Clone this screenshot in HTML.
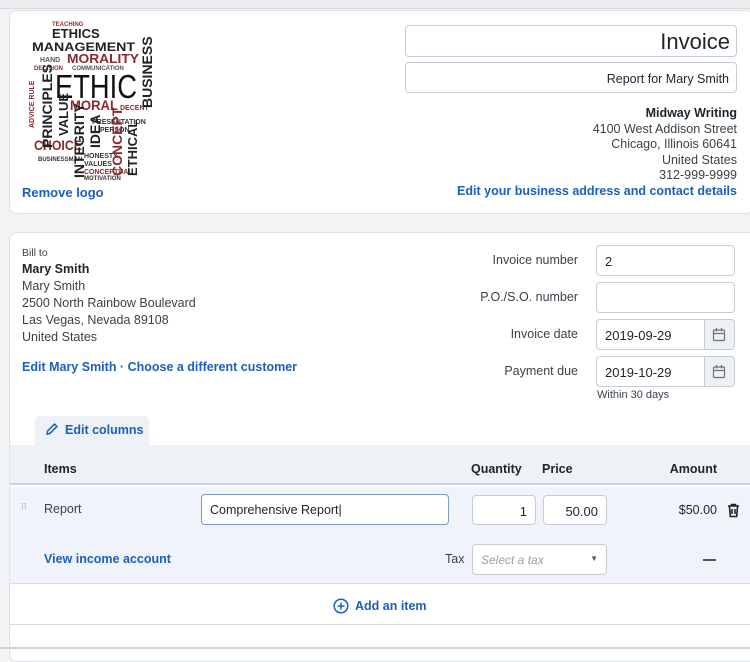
<!DOCTYPE html>
<html><head><meta charset="utf-8"><style>
*{box-sizing:border-box;margin:0;padding:0}
body{width:750px;height:649px;overflow:hidden;background:#f2f3f5;font-family:"Liberation Sans",sans-serif;color:#1c252c;position:relative;font-size:13px}
.a{position:absolute;white-space:nowrap}
.card{position:absolute;background:#fff;border:1px solid #dfe2e6;border-radius:8px}
.link{color:#1b5fbf;font-weight:bold}
.in{position:absolute;border:1px solid #c6ccd3;border-radius:4px;background:#fff}
.r{text-align:right}
.g{color:#3a4249}
</style></head><body>
<div class="a" style="left:0;top:0;width:750px;height:9px;background:#eceef0;border-bottom:1px solid #d6d9dd"></div>
<div class="card" style="left:9px;top:10px;width:745px;height:204px"></div>
<svg class="a" style="left:22px;top:18px" width="140" height="162" viewBox="0 0 140 162" font-family="Liberation Sans" font-weight="bold">
<text x="30" y="20" font-size="13" fill="#222">ETHICS</text>
<text x="30" y="8" font-size="6" fill="#9b2a2a">TEACHING</text>
<text x="10" y="33" font-size="12" fill="#222" textLength="103" lengthAdjust="spacingAndGlyphs">MANAGEMENT</text>
<text x="45" y="45" font-size="13" fill="#8c2a30" textLength="72" lengthAdjust="spacingAndGlyphs">MORALITY</text>
<text x="18" y="44" font-size="7" fill="#555">HAND</text>
<text x="12" y="52" font-size="6" fill="#8c2a30">DECISION</text>
<text x="50" y="52" font-size="6" fill="#555">COMMUNICATION</text>
<text x="33" y="80" font-size="33" fill="#111" font-weight="normal" textLength="82" lengthAdjust="spacingAndGlyphs">ETHIC</text>
<text x="48" y="92" font-size="14" fill="#8c2a30" textLength="48" lengthAdjust="spacingAndGlyphs">MORAL</text>
<text x="98" y="92" font-size="7" fill="#8c2a30">DECENT</text>
<text x="70" y="106" font-size="7" fill="#333">PRESENTATION</text>
<text x="78" y="114" font-size="7" fill="#333">PERSON</text>
<text x="12" y="132" font-size="14" fill="#8c2a30" textLength="48" lengthAdjust="spacingAndGlyphs">CHOICE</text>
<text x="16" y="143" font-size="6" fill="#333">BUSINESSMAN</text>
<text x="62" y="140" font-size="7" fill="#333">HONESTY</text>
<text x="62" y="148" font-size="7" fill="#333">VALUES</text>
<text x="62" y="156" font-size="7" fill="#8c2a30">CONCEPTUAL</text>
<text x="62" y="162" font-size="6" fill="#333">MOTIVATION</text>
<text transform="translate(30,130) rotate(-90)" font-size="14" fill="#222">PRINCIPLES</text>
<text transform="translate(46,118) rotate(-90)" font-size="13" fill="#222">VALUE</text>
<text transform="translate(62,160) rotate(-90)" font-size="14" fill="#222">INTEGRITY</text>
<text transform="translate(78,130) rotate(-90)" font-size="14" fill="#222">IDEA</text>
<text transform="translate(100,158) rotate(-90)" font-size="14" fill="#8c2a30">CONCEPT</text>
<text transform="translate(115,158) rotate(-90)" font-size="13" fill="#222">ETHICAL</text>
<text transform="translate(130,90) rotate(-90)" font-size="14" fill="#222">BUSINESS</text>
<text transform="translate(12,110) rotate(-90)" font-size="7" fill="#8c2a30">ADVICE RULE</text>
</svg>
<div class="a link" style="left:22px;top:185px;font-size:13px">Remove logo</div>
<div class="in" style="left:405px;top:25px;width:332px;height:32px"><div class="a r" style="right:6px;top:3px;font-size:22px;color:#1c252c">Invoice</div></div>
<div class="in" style="left:405px;top:62px;width:332px;height:31px"><div class="a r" style="right:7px;top:9px;font-size:12.5px" >Report for Mary Smith</div></div>
<div class="a r" style="right:13px;top:106px;line-height:15.5px;font-size:12.5px;text-align:right"><b>Midway Writing</b><br><span class="g">4100 West Addison Street<br>Chicago, Illinois 60641<br>United States<br>312-999-9999</span></div>
<div class="a link" style="right:13px;top:184px;font-size:12.5px">Edit your business address and contact details</div>

<div class="card" style="left:9px;top:232px;width:750px;height:430px"></div>
<div class="a g" style="left:22px;top:247px;font-size:10.5px">Bill to</div>
<div class="a" style="left:22px;top:261px;font-size:12.5px;line-height:17px"><b>Mary Smith</b><br><span class="g">Mary Smith<br>2500 North Rainbow Boulevard<br>Las Vegas, Nevada 89108<br>United States</span></div>
<div class="a link" style="left:22px;top:360px;font-size:12.5px">Edit Mary Smith · Choose a different customer</div>
<div class="a g r" style="right:172px;top:253px;font-size:12.5px">Invoice number</div>
<div class="a g r" style="right:172px;top:290px;font-size:12.5px">P.O./S.O. number</div>
<div class="a g r" style="right:172px;top:327px;font-size:12.5px">Invoice date</div>
<div class="a g r" style="right:172px;top:364px;font-size:12.5px">Payment due</div>
<div class="in" style="left:596px;top:245px;width:139px;height:31px"><span class="a" style="left:8px;top:8px">2</span></div>
<div class="in" style="left:596px;top:282px;width:139px;height:31px"></div>
<div class="in" style="left:596px;top:319px;width:139px;height:31px;overflow:hidden"><span class="a" style="left:8px;top:8px">2019-09-29</span><div class="a" style="left:107px;top:0;width:32px;height:31px;background:#eef1f4;border-left:1px solid #c6ccd3"></div><svg class="a" style="left:115px;top:7px" width="14" height="15" viewBox="0 0 14 15" fill="none" stroke="#6a737c" stroke-width="1.2"><rect x="1.5" y="3" width="11" height="10.5" rx="1"/><path d="M1.5 6.5h11M4.5 1v3.5M9.5 1v3.5"/></svg></div>
<div class="in" style="left:596px;top:356px;width:139px;height:31px;overflow:hidden"><span class="a" style="left:8px;top:8px">2019-10-29</span><div class="a" style="left:107px;top:0;width:32px;height:31px;background:#eef1f4;border-left:1px solid #c6ccd3"></div><svg class="a" style="left:115px;top:7px" width="14" height="15" viewBox="0 0 14 15" fill="none" stroke="#6a737c" stroke-width="1.2"><rect x="1.5" y="3" width="11" height="10.5" rx="1"/><path d="M1.5 6.5h11M4.5 1v3.5M9.5 1v3.5"/></svg></div>
<div class="a g" style="left:597px;top:389px;font-size:11px">Within 30 days</div>

<div class="a" style="left:35px;top:416px;width:114px;height:30px;background:#eef1f5;border-radius:5px 5px 0 0"></div>
<svg class="a" style="left:45px;top:422px" width="14" height="14" viewBox="0 0 14 14" fill="none" stroke="#1b5fbf" stroke-width="1.5"><path d="M2 12l.6-3L9.5 2.1l2.4 2.4L5 11.4z"/></svg>
<div class="a link" style="left:65px;top:423px;font-size:12.5px">Edit columns</div>
<div class="a" style="left:10px;top:445px;width:740px;height:40px;background:#eef1f5;border-bottom:2px solid #c9d2de"></div>
<div class="a" style="left:44px;top:462px;font-weight:bold;font-size:12.5px">Items</div>
<div class="a" style="left:471px;top:462px;font-weight:bold;font-size:12.5px">Quantity</div>
<div class="a" style="left:542px;top:462px;font-weight:bold;font-size:12.5px">Price</div>
<div class="a" style="right:33px;top:462px;font-weight:bold;font-size:12.5px">Amount</div>
<div class="a" style="left:10px;top:487px;width:740px;height:97px;background:#f0f3f9;border-bottom:1px solid #d6dce4"></div>
<div class="a" style="left:21px;top:504px;color:#888;font-size:9px;line-height:4px">⁝⁝</div>
<div class="a g" style="left:44px;top:502px;font-size:12.5px">Report</div>
<div class="in" style="left:201px;top:494px;width:248px;height:31px;border:1.5px solid #7f9bc4"><span class="a" style="left:8px;top:8px;font-size:12.5px">Comprehensive Report|</span></div>
<div class="in" style="left:472px;top:495px;width:64px;height:30px"><span class="a" style="right:8px;top:8px">1</span></div>
<div class="in" style="left:543px;top:495px;width:64px;height:30px"><span class="a" style="right:8px;top:8px">50.00</span></div>
<div class="a" style="right:33px;top:503px;font-size:12.5px">$50.00</div>
<svg class="a" style="left:727px;top:503px" width="13" height="15" viewBox="0 0 13 15" fill="none" stroke="#222" stroke-width="1.6"><path d="M1 3h11M4.5 3V1.5h4V3M2.5 3.5l.8 10h6.4l.8-10M5 6v5M8 6v5"/></svg>
<div class="a link" style="left:44px;top:552px;font-size:12.5px">View income account</div>
<div class="a g" style="left:445px;top:552px;font-size:12.5px">Tax</div>
<div class="in" style="left:472px;top:544px;width:135px;height:31px"><span class="a" style="left:8px;top:8px;font-style:italic;color:#9aa1a8;font-size:12px">Select a tax</span><span class="a" style="right:8px;top:9px;font-size:8px;color:#555">▼</span></div>
<div class="a" style="left:703px;top:559px;width:13px;height:1.5px;background:#555"></div>
<svg class="a" style="left:333px;top:598px" width="16" height="16" viewBox="0 0 16 16" fill="none" stroke="#1b5fbf" stroke-width="1.5"><circle cx="8" cy="8" r="6.8"/><path d="M8 4.5v7M4.5 8h7"/></svg>
<div class="a link" style="left:355px;top:599px;font-size:12.5px">Add an item</div>
<div class="a" style="left:10px;top:624px;width:740px;height:1px;background:#d6dce4"></div>
<div class="a" style="left:0;top:647px;width:750px;height:2px;background:#cfd2d6"></div>
</body></html>
